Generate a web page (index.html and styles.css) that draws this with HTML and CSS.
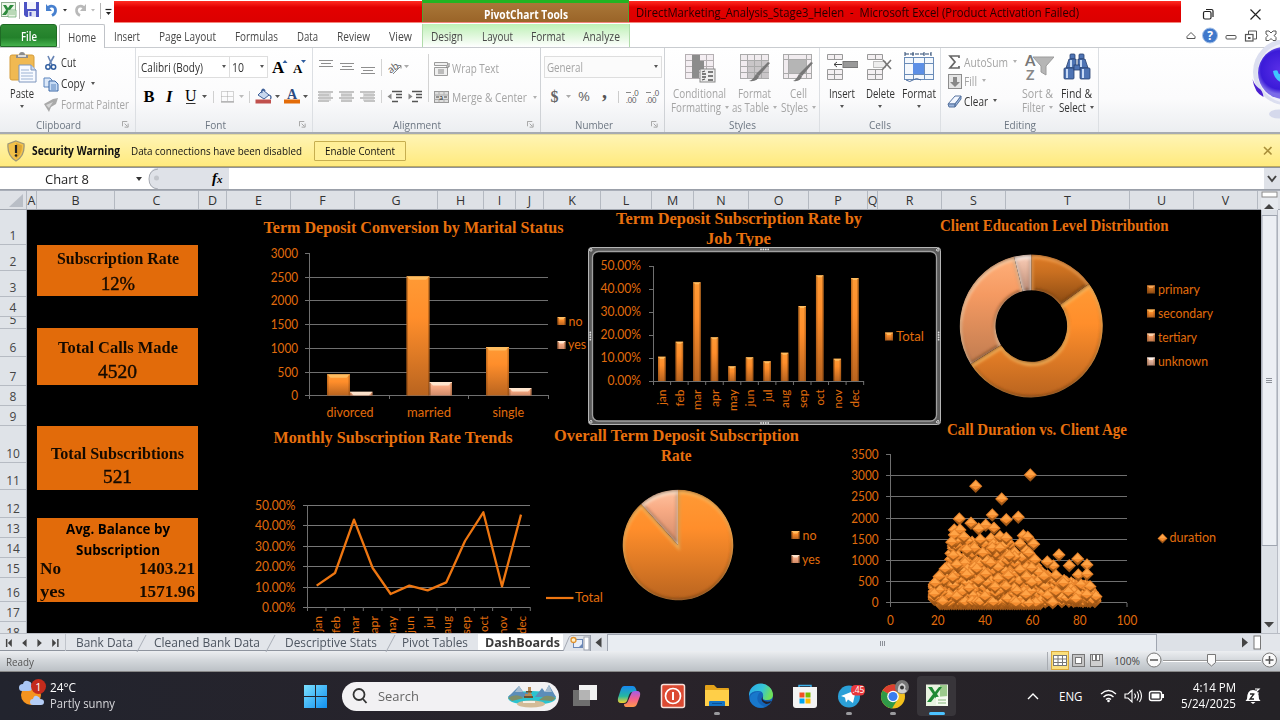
FILE: index.html
```html
<!DOCTYPE html>
<html lang="en">
<head>
<meta charset="utf-8">
<title>DirectMarketing_Analysis_Stage3_Helen - Microsoft Excel</title>
<link rel="stylesheet" href="styles.css">
</head>
<body>
<div class="app">
  <header class="titlebar">
    <svg class="quick" viewBox="0 0 114 24">
      <rect x="1.500" y="2.500" width="14" height="14" fill="#eef6ea" stroke="#8fae8f"/>
      <path d="M3 5l3 0 2 3 2-3h4l-4 5 4 5h-4l-2-3-2 3H2l4-5z" fill="#2e8b3d"/><path d="M8 10h8v7h-8z" fill="#e6f3e2" stroke="#5da465" stroke-width=".7"/><path d="M9 12h6M9 14h6" stroke="#8cbf8c"/>
      <path d="M19.500 2v17M100.500 3v16" stroke="#b5b5b5"/>
      <path d="M24 2h15v15H26l-2-2z" fill="#4c53c4"/><rect x="27" y="2" width="9" height="7" fill="#f3f4fc"/><rect x="28" y="11" width="8" height="6" fill="#dfe2f4"/><rect x="29.500" y="12" width="2" height="4" fill="#4c53c4"/>
      <path d="M47 9c3-5 9-3 8.500 2-.2 2-1.500 3.500-3.500 4.500" fill="none" stroke="#4780cf" stroke-width="2.800"/><path d="M46 4v7h6z" fill="#4780cf"/>
      <path d="M63 9h4l-2 2.500z" fill="#333"/>
      <path d="M85 9c-3-5-9-3-8.500 2 .2 2 1.500 3.500 3.500 4.500" fill="none" stroke="#b9b9b9" stroke-width="2.600"/><path d="M86 4v7h-6z" fill="#b9b9b9"/>
      <path d="M91 9h4l-2 2.500z" fill="#bbb"/>
      <path d="M105.500 9.500h6" stroke="#222" stroke-width="1.200"/><path d="M106 12h5l-2.500 3z" fill="#222"/>
    </svg>
    <div class="redbar">
      <div class="tools-title"><span class="fit" data-w="84">PivotChart Tools</span></div>
      <div class="doc-title"><span class="fit" data-w="443">DirectMarketing_Analysis_Stage3_Helen&nbsp; -&nbsp; Microsoft Excel (Product Activation Failed)</span></div>
    </div>
    <svg class="winctl" viewBox="1181 0 99 24"><g fill="none" stroke="#222" stroke-width="1.200"><rect x="1203.500" y="11.500" width="7.500" height="7.500" rx="1.500"/><path d="M1206 9.500h5.500q1.500 0 1.500 1.500v6"/><path d="M1250.500 9.500l10 10M1260.500 9.500l-10 10"/></g></svg>
  </header>

  <nav class="tabs">
    <div class="file"><span class="fit" data-w="16">File</span></div>
    <div class="tab home"><span class="fit" data-w="28">Home</span></div>
    <div class="tab t-insert"><span class="fit" data-w="26">Insert</span></div>
    <div class="tab t-page"><span class="fit" data-w="57">Page Layout</span></div>
    <div class="tab t-form"><span class="fit" data-w="43">Formulas</span></div>
    <div class="tab t-data"><span class="fit" data-w="21">Data</span></div>
    <div class="tab t-rev"><span class="fit" data-w="33">Review</span></div>
    <div class="tab t-view"><span class="fit" data-w="23">View</span></div>
    <div class="ctx">
      <div class="tab t-des"><span class="fit" data-w="32">Design</span></div>
      <div class="tab t-lay"><span class="fit" data-w="31">Layout</span></div>
      <div class="tab t-fmt"><span class="fit" data-w="34">Format</span></div>
      <div class="tab t-ana"><span class="fit" data-w="37">Analyze</span></div>
    </div>
    <svg class="docctl" viewBox="1180 24 100 24">
      <path d="M1187 38.500v-2l4-4 4 4v2z" fill="#fff" stroke="#555"/>
      <circle cx="1210" cy="35.500" r="7.500" fill="#3f78cb" stroke="#a9c3e8"/><text x="1210" y="40" class="help">?</text>
      <rect x="1226" y="35.500" width="10" height="3.500" rx="1" fill="#fff" stroke="#555"/>
      <path d="M1248.500 35v-4h8v8h-3" fill="#fff" stroke="#555"/><rect x="1245.500" y="34.500" width="7.500" height="6.500" fill="#fff" stroke="#555" stroke-width="1.200"/><rect x="1248" y="37" width="2.500" height="2" fill="#555"/>
      <path d="M1266 31h3l2 2 2-2h3v3l-2 1.500 2 2v3h-3l-2-2-2 2h-3v-3l2-2-2-1.500z" fill="#fff" stroke="#555" stroke-width="1"/>
    </svg>
  </nav>

  <section class="ribbon">
    <div class="group g-clip">
      <div class="body">
        <div class="big b-paste">
          <svg class="ico32" viewBox="0 0 32 32"><rect x="4" y="3" width="24" height="25" rx="2" fill="#f0b952" stroke="#d49c3a"/><path d="M10 6V3h3q0-3 3-3t3 3h3v3z" fill="#8c8c8c"/><rect x="12" y="3" width="8" height="2" fill="#ddd"/><path d="M13 13h12l5 5v12H13z" fill="#f7faff" stroke="#7d95bd"/><path d="M25 13v5h5" fill="#c9d9ef" stroke="#7d95bd"/><path d="M15 18h8M15 21h12M15 24h12M15 27h12" stroke="#9db3d3"/></svg>
          <span class="fit" data-w="24">Paste</span><i class="dn gap"></i>
        </div>
        <div class="list">
          <div class="row"><svg class="ico16" viewBox="0 0 16 16"><path d="M5 1l4 9M11 1L6 10" stroke="#6885b5" stroke-width="1.600"/><circle cx="5" cy="12" r="2.200" fill="none" stroke="#2f5d9f" stroke-width="1.500"/><circle cx="10.500" cy="12" r="2.200" fill="none" stroke="#2f5d9f" stroke-width="1.500"/></svg><span class="fit" data-w="15">Cut</span></div>
          <div class="row"><svg class="ico16" viewBox="0 0 16 16"><path d="M1 2h6l2 2v7H1z" fill="#dce8f8" stroke="#5b84bd"/><path d="M6 5h6l3 3v7H6z" fill="#c6dbf5" stroke="#3d69a6"/><path d="M8 9h5M8 11h5M8 13h5" stroke="#5b84bd"/></svg><span class="fit" data-w="24">Copy</span><i class="dn side"></i></div>
          <div class="row off"><svg class="ico16" viewBox="0 0 16 16"><path d="M1 7l9-5 5-1-2 6-5 3-2 5z" fill="#a9a9a9"/><path d="M3 8l7-3-4 6z" fill="#d6d6d6"/></svg><span class="fit" data-w="68">Format Painter</span></div>
        </div>
      </div>
      <div class="cap"><span class="fit" data-w="45">Clipboard</span><svg class="dlg" viewBox="0 0 8 8"><path d="M.5 6V.5H6M3 3l3 3M7 3v4H3" fill="none" stroke="#999"/></svg></div>
    </div>

    <div class="group g-font">
      <div class="body col">
        <div class="combos">
          <div class="combo c-face"><span class="fit" data-w="62">Calibri (Body)</span><i class="dn"></i></div>
          <div class="combo c-size"><span class="fit" data-w="12">10</span><i class="dn"></i></div>
          <svg class="grow" viewBox="269 56 44 22"><text x="273" y="73" class="ser b" font-size="17">A</text><path d="M283.500 63l2.500-3 2.500 3z" fill="#2f5d9f"/><text x="294" y="73" class="ser b" font-size="13">A</text><path d="M302 60h5l-2.500 3z" fill="#2f5d9f"/></svg>
        </div>
        <svg class="strip" viewBox="136 84 177 25">
          <text x="143.500" y="102" class="ser b" font-size="16.500">B</text><text x="166" y="102" class="ser b i" font-size="16.500">I</text><text x="185" y="101" class="ser" font-size="16">U</text><path d="M186 103.500h9.500" stroke="#333"/>
          <g fill="#555"><path d="M202 95h5l-2.500 3zM275 95h5l-2.500 3zM303 95h5l-2.500 3z"/><path d="M239 95h5l-2.500 3z" fill="#bbb"/></g>
          <path d="M213.500 91v12M249.500 91v12" stroke="#d0d0d0"/>
          <path d="M221.500 91.500h12v10h-12zM227.500 91.500v10M221.500 96.500h12" fill="none" stroke="#aaa" stroke-dasharray="1 1"/><path d="M221 102h13" stroke="#999"/>
          <rect x="255.500" y="99.500" width="15.500" height="4" fill="#c0504d"/><path d="M258 95l5-5 6 5-5 4z" fill="#c8d8ef" stroke="#3f6098"/><path d="M262 93c-1-4 2-5 3-2M269 95q3 1 1.500 4" fill="none" stroke="#3f6098" stroke-width="1.300"/>
          <rect x="284" y="99.500" width="16" height="4" fill="#e36c09"/><text x="287" y="99" class="ser b" font-size="14" fill="#2c4a80">A</text>
        </svg>
      </div>
      <div class="cap"><span class="fit" data-w="21">Font</span><svg class="dlg" viewBox="0 0 8 8"><path d="M.5 6V.5H6M3 3l3 3M7 3v4H3" fill="none" stroke="#999"/></svg></div>
    </div>

    <div class="group g-align">
      <div class="body">
        <svg class="alignstrip" viewBox="314 52 116 58">
          <g stroke="#8e8e8e" stroke-width="1"><path d="M320 60.500h14M322 63.500h10M320 66.500h14M341 63.500h14M343 66.500h10M341 69.500h14M362 67.500h14M364 70.500h10M362 73.500h14"/><path d="M382.500 59v17M382.500 90v13M429.500 54v48" stroke="#d3d3d3"/></g>
          <text x="388" y="71" font-size="10.500" class="lato" transform="rotate(-35 394 67)" fill="#666">ab</text><path d="M394 74l8-8M399 65.500h3v3" stroke="#888" fill="none"/><path d="M405 65h5l-2.500 3z" fill="#aaa"/>
          <g fill="#c4c4c4"><path d="M319 91h15v2h-15zM319 94h11v2h-11zM319 97h15v2h-15zM319 100h11v2h-11zM340 91h15v2h-15zM342 94h11v2h-11zM340 97h15v2h-15zM342 100h11v2h-11zM361 91h15v2h-15zM365 94h11v2h-11zM361 97h15v2h-15zM365 100h11v2h-11z"/><path d="M320 92h12v9h-12zM342 92h11v9h-11zM364 92h11v9h-11z" opacity=".6"/></g>
          <path d="M393 91.500h10M397 94.500h6M397 97.500h6M393 101.500h6M413 91.500h10M417 94.500h6M417 97.500h6M413 101.500h6" stroke="#555" stroke-width="1.400"/><path d="M388.500 96.500l4-3v6zM413.500 96.500l-4-3v6z" fill="#888"/>
        </svg>
        <div class="list off wrapcol">
          <div class="row r32"><svg class="ico16" viewBox="0 0 16 16"><path d="M.5 1.500h13v3H.5zM.5 6.500h13v8H.5z" fill="#efefef" stroke="#9b9b9b"/><rect x="4" y="8" width="6" height="5" fill="#bbb"/><path d="M15 2v4h-3" stroke="#777" fill="none"/></svg><span class="fit" data-w="47">Wrap Text</span></div>
          <div class="row r29"><svg class="ico16" viewBox="0 0 16 16"><rect x=".5" y="2.500" width="14" height="11" fill="#dedede" stroke="#999"/><path d="M.5 6h14M.5 10.500h14M5 2.500v3M10 2.500v3M5 11v2.500M10 11v2.500" stroke="#aaa"/><path d="M2 8h3M10 8h3" stroke="#444"/><text x="5.200" y="10.500" font-size="7.500" class="lato" fill="#333">a</text></svg><span class="fit" data-w="75">Merge &amp; Center</span><i class="dn side"></i></div>
        </div>
      </div>
      <div class="cap"><span class="fit" data-w="48">Alignment</span><svg class="dlg" viewBox="0 0 8 8"><path d="M.5 6V.5H6M3 3l3 3M7 3v4H3" fill="none" stroke="#999"/></svg></div>
    </div>

    <div class="group g-num">
      <div class="body col">
        <div class="combos"><div class="combo c-num"><span class="fit" data-w="36">General</span><i class="dn"></i></div></div>
        <svg class="numstrip" viewBox="541 84 123 25">
          <text x="550.500" y="102" class="ser b" font-size="16" fill="#666">$</text><path d="M566 95h5l-2.500 3z" fill="#aaa"/><text x="578" y="101" font-size="13" fill="#666" textLength="12" lengthAdjust="spacingAndGlyphs">%</text><text x="602" y="98" class="ser b" font-size="20" fill="#555">,</text><path d="M618.500 91v12" stroke="#ccc"/>
          <g class="lato" font-size="7.500" fill="#555"><text x="632.500" y="95.500">.0</text><text x="626" y="102.500">.00</text><text x="653" y="95.500">.0</text><text x="646" y="102.500">.00</text></g><path d="M626 92.500h5M646 92.500h5" stroke="#888"/>
        </svg>
      </div>
      <div class="cap"><span class="fit" data-w="38">Number</span><svg class="dlg" viewBox="0 0 8 8"><path d="M.5 6V.5H6M3 3l3 3M7 3v4H3" fill="none" stroke="#999"/></svg></div>
    </div>

    <div class="group g-sty">
      <div class="body off">
        <div class="big s1"><svg class="ico32" viewBox="0 0 32 32"><rect x="1.500" y="2.500" width="28" height="24" fill="#f4eef2" stroke="#b5b0b3"/><path d="M1 8.500h29M1 14.500h29M1 20.500h29M22.500 2v24" stroke="#b5b0b3"/><path d="M8 3h8v6h4v9h-5v8H8z" fill="#8c8c8c"/><rect x="16" y="17" width="15" height="13" fill="#eee" stroke="#888"/><path d="M18 20l3-1M18 22h4M24 20h5M18 25h4M24 24h5M18 28l3-1M24 28h5" stroke="#555" stroke-width="1.300"/></svg><span class="fit" data-w="53">Conditional</span><b><span class="fit" data-w="50">Formatting</span><i class="dn side"></i></b></div>
        <div class="big s2"><svg class="ico32" viewBox="0 0 32 32"><rect x="1.500" y="2.500" width="28" height="24" fill="#f1ecef" stroke="#aaa"/><path d="M8 8h22v18H8z" fill="#c9c6c8"/><path d="M1 8.500h29M1 14.500h29M1 20.500h29M8.500 2v24M15.500 2v24M22.500 2v24" stroke="#aaa"/><path d="M31 11l-11 13-3-2 12-12z" fill="#777"/><path d="M20 24q-1 6-10 5 4-1 7-7z" fill="#777"/></svg><span class="fit" data-w="33">Format</span><b><span class="fit" data-w="37">as Table</span><i class="dn side"></i></b></div>
        <div class="big s3"><svg class="ico32" viewBox="0 0 32 32"><rect x="1.500" y="2.500" width="28" height="24" fill="#f1ecef" stroke="#aaa"/><path d="M1 7.500h29M1 21.500h29M6.500 2v24M24.500 2v24" stroke="#aaa"/><path d="M7 8h17v13H7z" fill="#b5b5b5"/><path d="M31 11l-11 13-3-2 12-12z" fill="#777"/><path d="M20 24q-1 6-9 5 3-1 6-7z" fill="#777"/></svg><span class="fit" data-w="17">Cell</span><b><span class="fit" data-w="27">Styles</span><i class="dn side"></i></b></div>
      </div>
      <div class="cap"><span class="fit" data-w="27">Styles</span></div>
    </div>

    <div class="group g-cell">
      <div class="body">
        <div class="big c1"><svg class="ico32" viewBox="0 0 32 32"><path d="M1.500 2.500h15v5h-15zM8.500 2v5M1.500 17.500h15v10h-15zM8.500 17v10M1 22.500h15" fill="#f4f0f2" stroke="#999"/><rect x="17" y="9.500" width="15" height="6" fill="#999" stroke="#777"/><path d="M8 12.500h8M11 10l-3 2.500 3 2.500" stroke="#444" fill="none"/></svg><span class="fit" data-w="26">Insert</span><i class="dn gap"></i></div>
        <div class="big c2"><svg class="ico32" viewBox="0 0 32 32"><path d="M3.500 2.500h15v5h-15zM11.500 2v5M3.500 17.500h15v10h-15zM11.500 17v10M3 22.500h15" fill="#f4f0f2" stroke="#999"/><path d="M9.500 9.500h12v6h-12z" fill="#eee" stroke="#888" stroke-dasharray="1 1"/><path d="M19 8l8 9M27 8l-9 10" stroke="#777" stroke-width="1.600"/></svg><span class="fit" data-w="29">Delete</span><i class="dn gap"></i></div>
        <div class="big c3"><svg class="ico32" viewBox="0 0 32 32"><rect x="1.500" y="5.500" width="29" height="22" fill="#f4f8fd" stroke="#6a8cb8"/><path d="M1 11.500h29M1 22.500h29M10.500 5v22M21.500 5v22" stroke="#6a8cb8"/><rect x="10" y="11" width="11" height="11" fill="#5c8fe6"/><path d="M2 2h26M2 0v5M10 0v4M21 0v4M28 0v5" stroke="#26456f" stroke-dasharray="4 1"/><path d="M3 28q4 3 7 0t8 0" stroke="#4c6ea0" fill="none"/></svg><span class="fit" data-w="34">Format</span><i class="dn gap"></i></div>
      </div>
      <div class="cap"><span class="fit" data-w="22">Cells</span></div>
    </div>

    <div class="group g-edit">
      <div class="body">
        <div class="list edit">
          <div class="row e1 off"><svg class="ico16" viewBox="0 0 16 16"><path d="M12 4V2H3l5 6-5 6h9v-2" fill="none" stroke="#666" stroke-width="1.700"/></svg><span class="fit" data-w="44">AutoSum</span><i class="dn side"></i></div>
          <div class="row e1 off"><svg class="ico16" viewBox="0 0 16 16"><rect x="1.500" y="1.500" width="13" height="14" fill="#e5e5e5" stroke="#8d8d8d"/><path d="M6 4h4v5h3l-5 5-5-5h3z" fill="#888"/></svg><span class="fit" data-w="13">Fill</span><i class="dn side"></i></div>
          <div class="row e2"><svg class="ico16" viewBox="0 0 16 16"><path d="M1 11l7-8h6l-6 8z" fill="#f3f7ff" stroke="#56739f"/><path d="M1 11h7v3H2zM8 14l6-8V3l-6 8z" fill="#9bb5dc" stroke="#56739f"/></svg><span class="fit" data-w="24">Clear</span><i class="dn side"></i></div>
        </div>
        <div class="big f1 off"><svg class="ico32" viewBox="0 0 32 32"><path d="M11 5h21l-8 9v9l-5-3v-6z" fill="#b6b6b6" stroke="#9c9c9c"/><text x="3" y="14" class="lato b" font-size="15" fill="#777">A</text><text x="4" y="28" class="lato b" font-size="14" fill="#888">Z</text></svg><span class="fit" data-w="31">Sort &amp;</span><b><span class="fit" data-w="23">Filter</span><i class="dn side"></i></b></div>
        <div class="big f2"><svg class="ico32" viewBox="0 0 32 32"><g fill="#4f74b4" stroke="#263f70" stroke-width=".8"><rect x="9" y="2" width="5" height="5" rx="1"/><rect x="18" y="2" width="5" height="5" rx="1"/><path d="M8 7h7v9H5zM17 7h7l3 9H17z"/><rect x="3" y="16" width="10" height="11" rx="1"/><rect x="19" y="16" width="10" height="11" rx="1"/><rect x="13" y="13" width="6" height="5"/></g><path d="M6 17v9M22 17v9M10 8v7M20 8v7" stroke="#c8daf5" stroke-width="2"/></svg><span class="fit" data-w="31">Find &amp;</span><b><span class="fit" data-w="27">Select</span><i class="dn side"></i></b></div>
      </div>
      <div class="cap"><span class="fit" data-w="32">Editing</span></div>
    </div>
    <svg class="bot" viewBox="1250 40 30 84"><defs><radialGradient id="bg" cx="1280" cy="70" r="24" gradientUnits="userSpaceOnUse"><stop offset="0" stop-color="#5a2fe8"/><stop offset=".8" stop-color="#3b1bd8"/><stop offset="1" stop-color="#7b6be8"/></radialGradient></defs><circle cx="1286" cy="72" r="33" fill="#dcdff0"/><circle cx="1287" cy="73" r="29.500" fill="#f0f0fa"/><circle cx="1284" cy="73" r="26" fill="url(#bg)"/><path d="M1273 71q5-2 5 1t5 2v9q-9-3-10-12z" fill="#3fc6ff"/><path d="M1252.500 79q2 14 11 18-1-7-5-9-4-3-6-9z" fill="#4a1fd0"/><ellipse cx="1279" cy="114" rx="10" ry="4.500" fill="#d5d9ec"/></svg>
  </section>

  <section class="warning">
    <svg class="shield" viewBox="0 0 18 22"><path d="M9 1l8 3q1 12-8 17Q0 16 1 4z" fill="#f2c14a" stroke="#9f9878" stroke-width="1.300"/><path d="M9 3l6 2.500q0 9-6 13z" fill="#e0a631"/><path d="M9 5v8" stroke="#222" stroke-width="2.200"/><circle cx="9" cy="15.500" r="1.300" fill="#222"/></svg>
    <strong class="fit" data-w="88">Security Warning</strong>
    <span class="msg fit" data-w="171">Data connections have been disabled</span>
    <button class="enable"><span class="fit" data-w="70">Enable Content</span></button>
    <svg class="wclose" viewBox="0 0 10 10"><path d="M1 1l7.500 7.500M8.500 1L1 8.500" stroke="#a98f3a" stroke-width="1.600"/></svg>
  </section>

  <section class="formula">
    <div class="namebox"><span class="fit" data-w="44">Chart 8</span><i class="dn"></i></div>
    <div class="fx"><svg class="fxicon" viewBox="148 167 81 21"><path d="M155 167h74v21h-74q-6-2-6-10t6-11z" fill="#dfe2e8"/><path d="M158 168q-9 1-9 10t9 10" fill="none" stroke="#a7abb3"/><circle cx="156.500" cy="177" r="2.500" fill="#c3c6cc"/><text x="212" y="182" class="ser b i" font-size="15">f</text><text x="217" y="182" class="ser b i" font-size="11">x</text></svg></div>
    <div class="input"></div>
    <svg class="expand" viewBox="0 0 16 21"><path d="M4 8l4 5 4-5" fill="none" stroke="#444" stroke-width="2"/></svg>
  </section>

  <main class="book">
    <div class="colhead" id="cols"></div>
    <div class="work">
      <div class="rowhead" id="rows"></div>
      <div class="sheet">
        <div class="kpis">
          <div class="kpi k1"><h3><span class="fit" data-w="122">Subscription Rate</span></h3><p><span class="fit" data-w="34">12%</span></p></div>
          <div class="kpi k2"><h3><span class="fit" data-w="120">Total Calls Made</span></h3><p><span class="fit" data-w="39">4520</span></p></div>
          <div class="kpi k3"><h3><span class="fit" data-w="133">Total Subscribtions</span></h3><p><span class="fit" data-w="29">521</span></p></div>
          <div class="kpi k4"><h4><span class="fit" data-w="104">Avg. Balance by</span></h4><h4><span class="fit" data-w="84">Subscription</span></h4>
            <div class="pair"><span class="fit" data-w="21">No</span><span class="fit" data-w="56">1403.21</span></div>
            <div class="pair p2"><span class="fit" data-w="25">yes</span><span class="fit" data-w="56">1571.96</span></div></div>
        </div>
        <svg class="chart ch-marital" id="marital" viewBox="230 212 358 210"></svg>
        <svg class="chart ch-job" id="jobtitle" viewBox="590 210 340 36"></svg>
        <svg class="chart ch-edu" id="edu" viewBox="932 212 328 196"></svg>
        <svg class="chart ch-trend" id="trend" viewBox="230 426 378 207"></svg>
        <svg class="chart ch-pie" id="pie" viewBox="545 426 290 200"></svg>
        <svg class="chart ch-scatter" id="scatter" viewBox="840 412 420 221"></svg>
        <svg class="chart ch-rate" id="rate" viewBox="587 246 356 180"></svg>
      </div>
      <svg class="vscroll" viewBox="1261 210 19 423">
        <rect x="1261" y="210" width="19" height="423" fill="#e9ecf1"/><rect x="1261.500" y="209.500" width="16" height="424" fill="#dde1e7" stroke="#b9bdc6"/>
        <rect x="1262" y="215.500" width="15" height="330" fill="#eceff4" stroke="#9fa5b0"/><path d="M1266 378.500h6M1266 380.500h6M1266 382.500h6" stroke="#8c9098"/><path d="M1264 622h10l-5 5.500z" fill="#444"/>
      </svg>
    </div>
  </main>

  <section class="sheettabs">
    <svg class="navs" viewBox="0 633 66 18"><g fill="#444"><path d="M6 638h1.500v8H6zM12 638v8l-4-4zM27 638v8l-4.500-4zM38 638v8l4.500-4zM53 638v8l4-4zM58 638h1.500v8H58z"/></g></svg>
    <div class="stab w1"><span class="fit" data-w="57">Bank Data</span></div>
    <div class="stab w2"><span class="fit" data-w="106">Cleaned Bank Data</span></div>
    <div class="stab w3"><span class="fit" data-w="92">Descriptive Stats</span></div>
    <div class="stab w4"><span class="fit" data-w="66">Pivot Tables</span></div>
    <div class="stab active"><span class="fit" data-w="75">DashBoards</span></div>
    <svg class="hscroll" viewBox="563 633 717 18">
      <path d="M563 650.500l6-14q1-2 3-2h18v16z" fill="#dfe3e9" stroke="#a4a9b3"/><rect x="573.500" y="638.500" width="9" height="8" fill="#e8effa" stroke="#6b87b5"/><path d="M579 646l3-3v3z" fill="#6b87b5"/><circle cx="573.500" cy="639" r="2.500" fill="#fff3cc" stroke="#e0922e" stroke-width="1.300"/>
      <rect x="584" y="636" width="5" height="13" fill="#fff" stroke="#9aa0ab"/>
      <rect x="590.500" y="633.500" width="690" height="17" fill="#dde1e7"/><path d="M590.500 634v16" stroke="#9aa0ab"/><path d="M601.500 636.500v10l-6-5z" fill="#444"/>
      <rect x="607.500" y="633.500" width="549" height="17" fill="#e9edf2" stroke="#9fa5b0"/><path d="M880.500 640v5M882.500 640v5M884.500 640v5" stroke="#8c9098"/>
      <path d="M1242 636.500v10l6-5z" fill="#444"/><rect x="1254" y="635" width="6.500" height="13" fill="#fff" stroke="#777"/><rect x="1261" y="633" width="19" height="18" fill="#e3e6eb"/>
    </svg>
  </section>

  <footer class="status">
    <span class="fit ready" data-w="28">Ready</span>
    <svg class="views" viewBox="1040 652 240 20">
      <path d="M1047.500 653v18" stroke="#a8acb2"/>
      <rect x="1051.500" y="652.500" width="17" height="18" fill="#fbdf7d" stroke="#d9a93d"/><g fill="#fff" stroke="#777"><rect x="1053.500" y="656.500" width="13" height="10"/><path d="M1053 660h13M1053 663.500h13M1058 656v10M1062.500 656v10" fill="none"/>
      <rect x="1072.500" y="655.500" width="12" height="12" fill="#c5c5c5"/><rect x="1075.500" y="658.500" width="6" height="6"/><rect x="1090.500" y="655.500" width="12" height="12" fill="#cfcfcf"/><rect x="1092.500" y="655.500" width="3" height="6"/><rect x="1096.500" y="655.500" width="3" height="6"/></g>
      <text x="1114" y="666" font-size="11.500" fill="#444" textLength="26" lengthAdjust="spacingAndGlyphs">100%</text>
      <path d="M1163 661.500h98" stroke="#999"/><path d="M1163 662.500h98" stroke="#fff"/>
      <g fill="#fafafa" stroke="#777"><circle cx="1154" cy="661" r="7"/><circle cx="1269.500" cy="661" r="7"/><path d="M1207.500 655.500h8v8l-4 3.500-4-3.500z"/></g>
      <path d="M1150 661h8M1265.500 661h8M1269.500 657v8" stroke="#555" stroke-width="1.500"/>
    </svg>
  </footer>

  <footer class="taskbar">
    <div class="weather">
      <svg class="wicon" viewBox="18 677 30 30"><circle cx="31" cy="695" r="10" fill="#f5941f"/><path d="M22 691q-3 0-3-3.500t4-3.500q1-4 5-3t3.500 4q2 6-3 6z" fill="#a9c6f5"/><path d="M33 705q-3 0-3-3t3-3q1-4 4-3t3 3q4 0 4 3t-3 3z" fill="#b5cef7"/><circle cx="38.500" cy="686.500" r="7.500" fill="#c42b1c"/><text x="38.500" y="690.500" font-size="11" fill="#fff" text-anchor="middle">1</text></svg>
      <div class="wtext"><span class="fit" data-w="26">24°C</span><span class="fit" data-w="65">Partly sunny</span></div>
    </div>
    <svg class="start" viewBox="0 0 23 23"><defs><linearGradient id="wg" x2="1" y2="1"><stop offset="0" stop-color="#7be0ff"/><stop offset="1" stop-color="#1090f0"/></linearGradient></defs><path d="M0 0h11v11H0zM12 0h11v11H12zM0 12h11v11H0zM12 12h11v11H12z" fill="url(#wg)"/></svg>
    <div class="search">
      <svg class="mag" viewBox="0 0 18 18"><circle cx="8" cy="7.500" r="5.500" fill="none" stroke="#333" stroke-width="1.800"/><path d="M12 12l3.500 4" stroke="#333" stroke-width="1.800"/></svg>
      <span class="fit" data-w="41">Search</span>
      <svg class="scene" viewBox="0 0 50 24"><ellipse cx="25" cy="14" rx="24" ry="7" fill="#2cc3cf"/><path d="M1 13l11-11 5 7 3-1 3 5zM28 13l7-9 3 4 4-7 7 12z" fill="#5b8db8"/><path d="M8 8l4-6 4 6zM38 8l4-7 3 7z" fill="#a7bdd0"/><path d="M1 14q6-4 12-2l4 2-12 3zM49 14q-8-4-13-1l-4 3 13 1z" fill="#7f8f68"/><ellipse cx="24" cy="20" rx="14" ry="3.500" fill="#d3bb98"/><path d="M18 14h7v-4h-1V3h-3v7h-3z" fill="#b78a55"/><path d="M17 12h9v2h-9zM19 7h6v1.500h-6z" fill="#6e5230"/><path d="M16 17h12v2H16z" fill="#f5efe4"/></svg>
    </div>
    <div class="apps">
      <div class="appi"><svg viewBox="0 0 30 30"><rect x="3" y="9" width="17" height="16" fill="#6e6e6e"/><rect x="9" y="4" width="18" height="15" fill="#f2f2f2"/><path d="M9 9h11v10H9z" fill="#b4b4b4"/></svg></div>
      <div class="appi"><svg viewBox="0 0 30 30"><defs><linearGradient id="ca" x2="0" y2="1"><stop offset="0" stop-color="#1687f0"/><stop offset=".6" stop-color="#25b7a0"/><stop offset="1" stop-color="#f5d22b"/></linearGradient><linearGradient id="cb" x2="0" y2="1"><stop offset="0" stop-color="#a55ce8"/><stop offset=".5" stop-color="#f2608e"/><stop offset="1" stop-color="#ff9a4a"/></linearGradient></defs><path d="M10 5h9q2 0 3 3l1 3h-5q-2 0-3 3l-2 6q-1 2-3 2H7q-4 0-3-5l3-9q1-3 3-3z" fill="url(#ca)"/><path d="M21 10h2q4 0 3 5l-3 8q-1 3-4 3h-7q-2 0-2-3 3 0 4-3l3-7q1-3 4-3z" fill="url(#cb)"/></svg></div>
      <div class="appi"><svg viewBox="0 0 30 30"><rect x="3.500" y="3.500" width="23" height="23" rx="2" fill="#db4a32" stroke="#f6e0da" stroke-width="1.500"/><circle cx="15" cy="15" r="7.500" fill="none" stroke="#fff" stroke-width="1.700"/><path d="M15 11v8" stroke="#fff" stroke-width="2"/></svg></div>
      <div class="appi run"><svg viewBox="0 0 30 30"><path d="M3 5q0-1 1-1h8l3 3h11q1 0 1 1v17H3z" fill="#e3a21a"/><path d="M3 9h24v16H3z" fill="#ffcf48"/><path d="M8 20h14q1 0 1 1v4H7v-4q0-1 1-1z" fill="#1474c4"/><path d="M10 22.500h10" stroke="#0c4f91"/></svg></div>
      <div class="appi"><svg viewBox="0 0 30 30"><defs><linearGradient id="ea" x2="1" y2=".3"><stop offset="0" stop-color="#2aa8e8"/><stop offset=".6" stop-color="#35c5d8"/><stop offset="1" stop-color="#6fe05a"/></linearGradient></defs><circle cx="15" cy="15" r="12" fill="#1464b8"/><path d="M3 15a12 12 0 0 1 24-1q0 5-6 5-5 0-4-3 1-6-5-6-7 0-9 5z" fill="url(#ea)"/><path d="M12 14q-3 8 7 12-10 3-15-6-1-6 4-8 4-2 8-1-3 0-4 3z" fill="#1878cc"/><path d="M17 15q-4 5 3 8 4 0 6-3-6 2-9-1-1-2 0-4z" fill="#26222a"/></svg></div>
      <div class="appi"><svg viewBox="0 0 30 30"><path d="M9 8V4.500h12V8" fill="none" stroke="#3db0ea" stroke-width="1.500"/><path d="M3 6h24v18q0 3-3 3H6q-3 0-3-3z" fill="#f4f4f4"/><path d="M9.500 11.500h5v5h-5z" fill="#f25022"/><path d="M15.500 11.500h5v5h-5z" fill="#7fba00"/><path d="M9.500 17.500h5v5h-5z" fill="#00a4ef"/><path d="M15.500 17.500h5v5h-5z" fill="#ffb900"/></svg></div>
      <div class="appi run"><svg viewBox="0 0 30 30"><circle cx="15" cy="15.500" r="11" fill="#2ba0d8"/><path d="M7 15l15-6-3 13-5-3.500-2 3-1-5z" fill="#fff"/><rect x="17" y="4" width="14" height="10.500" rx="4.500" fill="#e9383c"/><text x="18.500" y="12.300" font-size="9" fill="#fff" textLength="12" lengthAdjust="spacingAndGlyphs">.45</text></svg></div>
      <div class="appi run"><svg viewBox="0 0 30 30"><circle cx="15" cy="15.500" r="12" fill="#f3c01c"/><path d="M15 15.500L4.600 9.500A12 12 0 0 1 26 10.500H15z" fill="#dc3f30"/><path d="M15 15.500L4.600 9.500A12 12 0 0 0 14 27.500l5.500-9z" fill="#2f9a48"/><circle cx="15" cy="15.500" r="5.800" fill="#fff"/><circle cx="15" cy="15.500" r="4.500" fill="#3b7ded"/><circle cx="24" cy="6" r="7" fill="#777"/><path d="M20 11q-1-7 4-9 5 2 3 6l2 2q-3 4-9 1z" fill="#d0d0d0"/><circle cx="24" cy="6.500" r="2" fill="#333"/></svg></div>
      <div class="appi cur"><svg viewBox="0 0 30 30"><rect x="4" y="3.500" width="22" height="21.500" fill="#e8f3e0"/><path d="M18 4h7v12h-7z" fill="#9ccb8c"/><path d="M6 6h4l3 5 4-5h3l-5 7 5 8h-4l-3-5-4 5H5l6-8z" fill="#1f8a35"/><path d="M14 16l12-1v10l-12-1z" fill="#f5fbf0"/><path d="M16 19h8M16 22h8" stroke="#84b57a"/></svg></div>
    </div>
    <svg class="tray" viewBox="1020 680 162 32"><g fill="none" stroke="#fff" stroke-width="1.400"><path d="M1028 699l5-5 5 5"/><path d="M1101 694q7.500-7 15 0M1103.500 697q5-4.500 10 0M1106 699.500q2.500-2 5 0"/><path d="M1125 694h3l4-4v12l-4-4h-3zM1134.500 693.500q2 2.500 0 5M1137 691.500q3 4.500 0 9M1139.500 690q4 6 0 12" stroke-width="1.100"/><rect x="1149.500" y="691.500" width="12" height="9" rx="2"/></g><circle cx="1108.500" cy="701" r="1.300" fill="#fff"/><rect x="1151.500" y="693.500" width="8" height="5" fill="#fff"/><path d="M1162 694h2v4h-2z" fill="#fff"/><text x="1059" y="700.500" font-size="12" fill="#fff" textLength="23.500" lengthAdjust="spacingAndGlyphs">ENG</text></svg>
    <div class="clock"><span class="fit" data-w="43">4:14 PM</span><span class="fit" data-w="55">5/24/2025</span></div>
    <svg class="bell" viewBox="0 0 18 18"><path d="M3 12q0-9 6-9t6 9l1.500 2h-15z" fill="#fff"/><path d="M6.500 15h5l-2.500 2z" fill="#fff"/><path d="M6 7h4l-4 5h4" fill="none" stroke="#222" stroke-width="1.300"/><path d="M11 2h4l-4 4h4" fill="none" stroke="#fff" stroke-width="1.200"/></svg>
  </footer>
</div>
<script src="charts.js"></script>
</body>
</html>
```
FILE: styles.css
```css
* { box-sizing: border-box; }
body { margin: 0; background: #fff; font-family: "Open Sans", "Noto Sans", sans-serif; font-size: 11.5px; color: #333; overflow: hidden; }
.app { width: 1280px; height: 720px; display: flex; flex-direction: column; }
svg { display: block; overflow: hidden; flex: none; }
svg text { font-family: "Open Sans", "Noto Sans", sans-serif; }
svg text.ser { font-family: "Liberation Serif", serif; }
svg text.lato, svg .lato text { font-family: Lato, sans-serif; }
.b { font-weight: bold; }
.i { font-style: italic; }
.fit { white-space: nowrap; display: inline-block; flex: none; text-align: left; transform-origin: 0 50%; }
h3, h4, p { margin: 0; }

.titlebar { height: 24px; display: flex; }
.quick { width: 114px; height: 24px; }
.redbar { width: 1067px; height: 22px; margin-top: 1px; display: flex; align-items: stretch; padding-left: 308px; background: linear-gradient(#ff2b22, #e30000 30%, #dc0000); border-bottom: 1px solid #f3867c; }
.tools-title { width: 207px; margin-top: -1px; background: linear-gradient(#a97738, #9a6428); border-top: 3px solid #22b422; border-left: 1px solid #55a030; border-right: 1px solid #55a030; display: flex; justify-content: center; align-items: center; color: #fff; font-weight: bold; padding-top: 3px; }
.doc-title { padding-left: 7px; padding-top: 4px; line-height: 15px; color: #260000; font-size: 12px; }
.winctl { width: 99px; height: 24px; }

.tabs { height: 24px; display: flex; border-bottom: 1px solid #c9ccd0; font-size: 11.8px; color: #484848; }
.file { width: 57px; margin-right: 2px; background: linear-gradient(#2f8b34, #23812b 60%, #45b14d); border: 1px solid #1f6b25; border-radius: 3px 3px 0 0; color: #fff; display: flex; align-items: center; justify-content: center; font-weight: 600; }
.tab { display: flex; align-items: center; justify-content: center; }
.home { width: 46px; height: 24px; border: 1px solid #c0c3c8; border-bottom: 0; border-radius: 2px 2px 0 0; background: #fff; }
.t-insert { width: 44px; } .t-page { width: 77px; } .t-form { width: 60px; } .t-data { width: 42px; } .t-rev { width: 50px; } .t-view { width: 44px; }
.ctx { display: flex; width: 208px; background: linear-gradient(#bdf0b6, #d8f6d3 40%, #fff); border-left: 1px solid #b0dcaa; border-right: 1px solid #b0dcaa; }
.t-des { width: 49px; } .t-lay { width: 51px; } .t-fmt { width: 51px; } .t-ana { width: 56px; }
.docctl { width: 100px; height: 24px; margin-left: auto; }
.help { font-size: 12px; font-weight: bold; fill: #fff; text-anchor: middle; }

.ribbon { height: 86px; display: flex; background: linear-gradient(#fff, #fbfbfc 60%, #eceef1); border-bottom: 2px solid #a7abb2; position: relative; }
.group { border-right: 1px solid #dcdfe3; padding-top: 4px; display: flex; flex-direction: column; }
.g-clip { width: 136px; } .g-font { width: 177px; } .g-align { width: 228px; border-color: #cfd2d6; } .g-num { width: 124px; border-color: #cfd2d6; } .g-sty { width: 155px; } .g-cell { width: 121px; } .g-edit { width: 158px; }
.body { height: 65px; display: flex; }
.body.col { flex-direction: column; }
.cap { height: 15px; display: flex; justify-content: center; align-items: center; color: #6c7682; font-size: 11.5px; position: relative; }
.g-clip .cap { padding-right: 19px; } .g-font .cap { padding-right: 18px; } .g-align .cap { padding-right: 20px; } .g-num .cap { padding-right: 17px; }
.dlg { width: 7px; height: 7px; position: absolute; right: 6px; top: 4px; }
.big { display: flex; flex-direction: column; align-items: center; line-height: 14px; font-size: 11.8px; }
.big b { font-weight: normal; display: flex; align-items: center; line-height: 14px; }
.ico32 { width: 32px; height: 32px; margin-bottom: 2px; }
.ico16 { width: 16px; height: 16px; }
.big > .fit { height: 14px; }
.dn { width: 0; height: 0; border: 2.5px solid transparent; border-top: 3px solid #555; border-bottom: 0; flex: none; }
.dn.side { margin-left: 4px; }
.dn.gap { margin-top: 5px; }
.off { color: #a4a4a4; }
.off .dn { border-top-color: #b0b0b0; }
.b-paste { width: 43px; }
.list { display: flex; flex-direction: column; }
.row { display: flex; align-items: center; gap: 2px; height: 21px; font-size: 12px; }
.combos { display: flex; align-items: center; height: 32px; padding: 0 0 3px 2px; }
.combo { height: 22px; border: 1px solid #dedede; background: #fff; display: flex; align-items: center; justify-content: space-between; padding: 0 3px 0 2px; font-size: 11.8px; }
.c-face { width: 93px; } .c-size { width: 38px; border-left: 0; } .c-num { width: 118px; margin-left: 1px; color: #a4a4a4; background: #fbfbfb; }
.grow { width: 44px; height: 22px; }
.strip { width: 177px; height: 25px; }
.numstrip { width: 123px; height: 25px; }
.alignstrip { width: 116px; height: 58px; }
.wrapcol { padding-left: 5px; }
.r32 { height: 33px; } .r29 { height: 24px; }
.s1 { width: 61px; margin-left: 4px; } .s2 { width: 49px; } .s3 { width: 38px; }
.c1 { width: 39px; margin-left: 2px; } .c2 { width: 38px; } .c3 { width: 39px; }
.edit { padding-left: 6px; width: 76px; }
.edit .row { gap: 1px; font-size: 11.8px; }
.edit .e1 { height: 19px; } .edit .e2 { height: 21px; }
.f1 { width: 41px; } .f2 { width: 37px; }
.bot { position: absolute; right: 0; top: -8px; width: 30px; height: 84px; }

.warning { height: 33px; display: flex; align-items: center; padding: 0 7px; background: linear-gradient(#fff4b4, #ffea7e); border-top: 1px solid #e6dca0; border-bottom: 1px solid #b9a860; color: #111; }
.shield { width: 18px; height: 22px; margin-right: 7px; }
.msg { margin-left: 11px; }
.enable { margin: 0 0 0 12px; padding: 0; width: 92px; height: 20px; border: 1px solid #c6ae50; border-radius: 1px; background: #ffef97; font: 11.5px "Open Sans", sans-serif; color: #111; }
.wclose { width: 10px; height: 10px; margin-left: auto; }

.formula { height: 23px; display: flex; border-top: 1px solid #8e939c; border-bottom: 1px solid #9ba0a9; background: #fff; }
.namebox { width: 148px; display: flex; align-items: center; justify-content: flex-end; padding-right: 6px; font-size: 13px; color: #222; }
.namebox .fit { margin-right: 47px; }
.namebox .dn { border-width: 4px 3.500px 0; border-top-color: #333; }
.fxicon { width: 81px; height: 21px; }
.input { flex: 1; }
.expand { width: 16px; height: 21px; background: #dfe2e8; }

.book { height: 443px; display: flex; flex-direction: column; background: #000; }
.colhead { height: 20px; display: flex; background: #dee1e6; border-top: 1px solid #a9aeb8; border-bottom: 1px solid #a2a7b0; }
.colhead div { flex: none; border-right: 1px solid #b4b9c1; display: flex; justify-content: center; align-items: center; font-size: 12.5px; color: #333; overflow: hidden; }
.colhead .corner { justify-content: flex-end; align-items: flex-end; }
.corner svg { width: 14px; height: 13px; margin: 0 3px 2px 0; }
.work { flex: 1; display: flex; height: 423px; }
.rowhead { width: 27px; overflow: hidden; background: #dfe3e8; border-right: 1px solid #a4a9b2; }
.rowhead div { border-bottom: 1px solid #b6bbc3; display: flex; align-items: flex-end; justify-content: center; line-height: 16px; font-size: 12px; color: #444; overflow: hidden; }
.sheet { width: 1234px; height: 423px; position: relative; overflow: hidden; background: #000; }
.vscroll { width: 19px; height: 423px; }

.kpis { width: 161px; margin-left: 10px; padding-top: 35px; display: flex; flex-direction: column; }
.kpi { background: #e26b0a; color: #140a00; font-family: "Liberation Serif", serif; text-align: center; }
.kpi h3 { font-size: 16px; line-height: 18px; }
.kpi p { font-size: 19px; line-height: 22px; -webkit-text-stroke: .4px #140a00; }
.k1 { height: 51px; padding-top: 5px; margin-bottom: 32px; } .k1 p { margin-top: 5px; }
.k2 { height: 57px; padding-top: 11px; margin-bottom: 41px; } .k2 p { margin-top: 4px; }
.k3 { height: 64px; padding-top: 19px; margin-bottom: 28px; } .k3 p { margin-top: 3px; }
.k4 { height: 84px; padding-top: 0; }
.kpi h4 { font: bold 14.5px/21px "Open Sans", sans-serif; color: #000; }
.pair { display: flex; justify-content: space-between; padding: 0 3px; font-weight: bold; font-size: 17px; line-height: 18px; }
.p2 { margin-top: 5px; }

.chart { position: absolute; }
.ch-marital { left: 203px; top: 2px; width: 358px; height: 210px; }
.ch-job { left: 563px; top: 0; width: 340px; height: 36px; }
.ch-edu { left: 905px; top: 2px; width: 328px; height: 196px; }
.ch-trend { left: 203px; top: 216px; width: 378px; height: 207px; }
.ch-pie { left: 518px; top: 216px; width: 290px; height: 200px; }
.ch-scatter { left: 813px; top: 202px; width: 420px; height: 221px; }
.ch-rate { left: 560px; top: 36px; width: 356px; height: 180px; }
.chart text { fill: #e06c0c; font-family: Lato, sans-serif; }
.chart text.ttl { font-family: "Liberation Serif", serif; font-weight: bold; font-size: 17px; fill: #e8700e; }

.sheettabs { height: 18px; display: flex; background: #e2e5ea; font-size: 12.3px; color: #4d5560; border-top: 1px solid #b8bcc4; border-bottom: 1px solid #8e949e; }
.navs { width: 66px; height: 18px; border-right: 1px solid #c0c4cb; }
.stab { display: flex; align-items: center; justify-content: center; position: relative; }
.stab:not(.active):not(.w4)::after { content: ""; position: absolute; right: 0; top: 1px; height: 17px; border-right: 1px solid #a9aeb7; transform: skewX(-28deg); }
.w1 { width: 76px; } .w2 { width: 129px; } .w3 { width: 120px; } .w4 { width: 87px; }
.active { width: 85px; padding-left: 4px; background: #fff; font-weight: bold; color: #3c3c3c; }
.hscroll { width: 717px; height: 18px; }

.status { height: 21px; display: flex; align-items: center; justify-content: space-between; background: linear-gradient(#eceef1, #d4d8dc 45%, #bcc1c6); border-bottom: 1px solid #888; padding-left: 6px; color: #555; }
.views { width: 240px; height: 20px; }

.taskbar { height: 48px; display: flex; align-items: center; background: linear-gradient(90deg, #22242e, #29232a 50%, #242226); color: #fff; }
.weather { display: flex; align-items: center; width: 304px; padding-left: 18px; gap: 2px; }
.wicon { width: 30px; height: 30px; margin-top: -8px; }
.wtext { display: flex; flex-direction: column; align-items: flex-start; line-height: 16px; font-size: 12px; }
.wtext .fit + .fit { color: #d8d8dc; }
.start { width: 23px; height: 23px; }
.search { width: 217px; height: 29px; margin-left: 15px; border-radius: 15px; background: #f2f1f3; color: #666; display: flex; align-items: center; font-size: 13.5px; padding-left: 9px; }
.mag { width: 18px; height: 18px; margin-right: 9px; }
.scene { width: 50px; height: 24px; margin-left: auto; margin-right: 2px; }
.apps { display: flex; margin-left: 4px; }
.appi { width: 44px; height: 40px; display: flex; align-items: center; justify-content: center; position: relative; }
.appi svg { width: 30px; height: 30px; overflow: visible; }
.run::after { content: ""; position: absolute; bottom: 1px; left: 19px; width: 6px; height: 3px; border-radius: 2px; background: #9a9a9e; }
.cur { width: 39px; margin-left: 2px; background: #38353a; border-radius: 4px; }
.cur::after { content: ""; position: absolute; bottom: 1px; left: 12px; width: 16px; height: 3px; border-radius: 2px; background: #4cc2ff; }
.tray { width: 162px; height: 32px; margin-left: auto; }
.clock { width: 54px; display: flex; flex-direction: column; align-items: flex-end; line-height: 16px; font-size: 12px; }
.bell { width: 18px; height: 18px; margin: 0 18px 0 8px; }
```
FILE: charts.js
```js
const NS = 'http://www.w3.org/2000/svg';
const $ = id => document.getElementById(id);

/* Condense or widen each label to its slot width. */
document.querySelectorAll('.fit').forEach(el => {
  const target = +el.dataset.w;
  const nat = el.getBoundingClientRect().width;
  el.style.width = target + 'px';
  el.style.transform = `scaleX(${(target / nat).toFixed(4)})`;
});

/* Column and row headings. */
const colEdges = [27, 37, 115, 199, 227, 291, 355, 438, 484, 516, 544, 601, 652, 694, 749, 809, 868, 878, 942, 1006, 1130, 1194, 1258];
$('cols').innerHTML = '<div class="corner" style="width:27px"><svg viewBox="0 0 14 13"><path d="M14 0v13H0z" fill="#b9bec6"/></svg></div>' +
  colEdges.slice(1).map((e, i) => `<div style="width:${e - colEdges[i]}px">${String.fromCharCode(65 + i)}</div>`).join('') +
  '<svg width="22" height="19" viewBox="1258 191 22 19"><rect x="1261" y="191" width="17" height="19" fill="#e6e9ee"/><rect x="1262" y="192" width="15" height="5" fill="#fff" stroke="#888"/><path d="M1264 209l5-5 5 5z" fill="#444"/></svg>';
const rowEdges = [210, 245, 271, 297, 317, 329, 357, 386, 406, 426, 463, 490, 518, 538, 558, 578, 602, 622, 642];
$('rows').innerHTML = rowEdges.slice(1).map((e, i) => `<div style="height:${e - rowEdges[i]}px">${i + 1}</div>`).join('');

const txt = (x, y, s, w, o = {}) => {
  const a = o.anchor || 'start';
  const rot = o.rot ? ` transform="rotate(-90 ${x} ${y})"` : '';
  const len = w ? ` textLength="${w}" lengthAdjust="spacingAndGlyphs"` : '';
  return `<text class="${o.cls || ''}" x="${x}" y="${y}" font-size="${o.size || 12.5}" text-anchor="${a}"${len}${rot}>${s}</text>`;
};
const title = (x, y, s, w) => txt(x, y, s, w, { cls: 'ttl', size: 17 });
const line = (x1, y1, x2, y2, c = '#6f6f6f') => `<path d="M${x1} ${y1}L${x2} ${y2}" stroke="${c}" fill="none"/>`;

const shades = { o: ['#ff9a35', '#ff8e2b', '#b9641f', '#ffc56b'], p: ['#ffc3a0', '#f8ab85', '#d08a68', '#fff0dc'], t: ['#ffb07a', '#f59a62', '#c07c50', '#ffe0bd'], d: ['#e07c26', '#c96f20', '#8a4a12', '#ffb060'], u: ['#fbd0ba', '#e8b9a2', '#b98c78', '#fff'] };
const defs = p => '<defs>' + Object.entries(shades).map(([k, c]) =>
  `<linearGradient id="${p}${k}" x2="0" y2="1"><stop offset="0" stop-color="${c[0]}"/><stop offset=".35" stop-color="${c[1]}"/><stop offset="1" stop-color="${c[2]}"/></linearGradient>`).join('') +
  '<filter id="' + p + 'bl" x="-30%" y="-30%" width="160%" height="160%"><feGaussianBlur stdDeviation="1.8"/></filter></defs>';
const bar = (p, k, x, y, w, y2, bev) => {
  const h = y2 - y, b = Math.min(bev, h);
  return `<rect x="${x}" y="${y}" width="${w}" height="${h}" fill="url(#${p}${k})"/>` +
    `<path d="M${x} ${y}h${w}l-${b} ${b}h-${w - 2 * b}z" fill="${shades[k][3]}" opacity=".8"/>` +
    `<path d="M${x + .75} ${y + 1}V${y2}M${x + w - .75} ${y + 1}V${y2}" stroke="#6b3508" stroke-width="1.500" opacity=".35"/>`;
};
const key = (p, k, x, y) => bar(p, k, x, y, 8, y + 8, 2.5);

/* Conversion by marital status */
{
  let s = defs('m') + title(263.5, 233, 'Term Deposit Conversion by Marital Status', 300);
  for (let i = 0; i <= 6; i++) {
    const y = Math.round(253 + i * 23.7) + .5, v = String(3000 - i * 500);
    s += line(305, y, i ? 548 : 310, y) + txt(298, y + 4, v, v.length * 6.8, { anchor: 'end' });
  }
  s += line(309.5, 253, 309.5, 399);
  [389.5, 468.5, 548.5].forEach(x => s += line(x, 395, x, 399));
  [[327, 374.3, 391.8], [406.5, 276.3, 382], [486, 347, 388]].forEach(([x, a, b]) => s += bar('m', 'o', x, a, 23, 395.5, 3.5) + bar('m', 'p', x + 23, b, 22.5, 395.5, 3.5));
  s += txt(326.5, 417, 'divorced', 47) + txt(407, 417, 'married', 44) + txt(492.5, 417, 'single', 31.5);
  s += key('m', 'o', 557.5, 317) + txt(568.5, 325.500, 'no', 14) + key('m', 'p', 557.5, 341) + txt(568, 349, 'yes', 18);
  $('marital').innerHTML = s;
}

$('jobtitle').innerHTML = title(616, 223.5, 'Term Deposit Subscription Rate by', 246) + title(706, 244, 'Job Type', 65);

const months = ['jan', 'feb', 'mar', 'apr', 'may', 'jun', 'jul', 'aug', 'sep', 'oct', 'nov', 'dec'];
const mw = [15.5, 17, 20.5, 17.5, 21.5, 17, 12, 18.5, 18.5, 16, 19, 18];

/* Subscription rate, selected chart */
{
  let s = defs('r') + '<rect x="588.5" y="247.500" width="352" height="177" rx="3" fill="#5a5a5a" stroke="#b5b5b5"/><rect x="592.5" y="251.500" width="344" height="169.500" rx="6" fill="#000" stroke="#a0a0a0" stroke-width="1.300"/>';
  const grip = (x, y) => { for (let i = 0; i < 4; i++) s += `<circle cx="${x}" cy="${y}" r=".9" fill="#ddd"/>`, x += 2.4; };
  grip(761, 249.4); grip(761, 423);
  [590.3, 938.6].forEach(x => { for (let i = 0; i < 4; i++) s += `<circle cx="${x}" cy="${332.5 + i * 2.4}" r=".9" fill="#ddd"/>`; });
  [[591, 250], [938, 250], [591, 422], [938, 422]].forEach(([x, y]) => s += `<path d="M${x - 2} ${y}h4M${x} ${y - 2}v4" stroke="#e0e0e0" stroke-width="1.500" stroke-dasharray="1 .8"/>`);
  for (let i = 0; i <= 5; i++) {
    const y = Math.round(266 + i * 23) + .5;
    s += line(649, y, 653, y) + txt(641, y + 3.8, (50 - i * 10) + '.00%', i < 5 ? 40.5 : 33.5, { anchor: 'end' });
  }
  s += line(653.5, 266, 653.5, 385) + line(649, 381.5, 864, 381.5);
  const tops = [356.7, 341.7, 282.3, 337.3, 366.3, 357.3, 361.3, 352.7, 306, 275.3, 358.7, 278];
  tops.forEach((t, i) => {
    const cx = 661.8 + i * 17.55;
    s += line(cx + 8.8, 381, cx + 8.8, 385) + bar('r', 'o', cx - 3.8, t, 7.6, 381, 2) + txt(cx + 4.5, 389.5, months[i], mw[i], { anchor: 'end', rot: 1, size: 12 });
  });
  s += key('r', 'o', 885, 332.500) + txt(896, 340.500, 'Total', 28);
  $('rate').innerHTML = s;
}

const pt = (cx, cy, r, a) => { const t = a * Math.PI / 180; return `${(cx + r * Math.sin(t)).toFixed(2)} ${(cy - r * Math.cos(t)).toFixed(2)}`; };
const slice = (p, k, cx, cy, R, r, a, b) => {
  const lg = b - a > 180 ? 1 : 0, id = p + 'c' + Math.round(a);
  const d = r ? `M${pt(cx, cy, R, a)}A${R} ${R} 0 ${lg} 1 ${pt(cx, cy, R, b)}L${pt(cx, cy, r, b)}A${r} ${r} 0 ${lg} 0 ${pt(cx, cy, r, a)}Z`
    : `M${cx} ${cy}L${pt(cx, cy, R, a)}A${R} ${R} 0 ${lg} 1 ${pt(cx, cy, R, b)}Z`;
  return `<clipPath id="${id}"><path d="${d}"/></clipPath><g clip-path="url(#${id})"><path d="${d}" fill="url(#${p}${k})"/>` +
    `<g filter="url(#${p}bl)"><path d="${d}" fill="none" stroke="#5d2f0a" stroke-width="3.500" opacity=".7"/><path d="${d}" transform="translate(.5 2.500)" fill="none" stroke="${shades[k][3]}" stroke-width="2.400" opacity=".8"/></g></g>`;
};

/* Education doughnut */
{
  const c = [1031.3, 326, 71.5, 35.8];
  let s = defs('e') + title(940, 231, 'Client Education Level Distribution', 228.5);
  s += slice('e', 'd', ...c, 0, 53.8) + slice('e', 'o', ...c, 53.8, 238) + slice('e', 't', ...c, 238, 346) + slice('e', 'u', ...c, 346, 359.99);
  [['d', 'primary', 42], ['o', 'secondary', 55], ['t', 'tertiary', 39], ['u', 'unknown', 50]].forEach(([k, n, w], i) => s += key('e', k, 1147, 285.5 + i * 24) + txt(1158, 293.5 + i * 24, n, w));
  $('edu').innerHTML = s;
}

/* Monthly trend */
{
  let s = title(273.5, 442.500, 'Monthly Subscription Rate Trends', 239);
  for (let i = 0; i <= 5; i++) {
    const y = Math.round(505 + i * 20.4) + .5;
    s += line(303, y, 530, y, '#777') + txt(295.5, y + 4, (50 - i * 10) + '.00%', i < 5 ? 40.5 : 33.5, { anchor: 'end' });
  }
  s += line(307.5, 505, 307.5, 611);
  const pts = [[200, 497], [255, 459], [312, 299], [368, 444], [422, 522], [478, 497], [533, 511], [589, 487], [645, 363], [700, 277], [756, 499], [813, 284]].map(([x, y]) => [250 + x / 3, 420 + y / 3]);
  pts.forEach(([x], i) => s += line(x + 9.3, 607, x + 9.3, 611) + txt(x + 5, 616, months[i], mw[i], { anchor: 'end', rot: 1, size: 12 }));
  s += `<polyline points="${pts.map(p => p.join()).join(' ')}" fill="none" stroke="#ee7611" stroke-width="2.300" stroke-linejoin="round"/>`;
  s += '<path d="M546 598h27.500" stroke="#ee7611" stroke-width="2.200"/>' + txt(575, 602, 'Total', 28);
  $('trend').innerHTML = s;
}

/* Overall rate pie */
{
  let s = defs('p') + title(554, 440.5, 'Overall Term Deposit Subscription', 245) + title(661, 460.5, 'Rate', 30.5);
  s += slice('p', 'o', 678, 545, 55.3, 0, 0, 318) + slice('p', 'p', 678, 545, 55.3, 0, 318, 359.99);
  s += key('p', 'o', 791.5, 531) + txt(802.5, 539.500, 'no', 14) + key('p', 'p', 791.5, 555) + txt(802, 563.5, 'yes', 18);
  $('pie').innerHTML = s;
}

/* Duration against age */
{
  let s = '<defs><linearGradient id="dg" x2="0" y2="1"><stop offset="0" stop-color="#e8872f"/><stop offset=".5" stop-color="#e8822a"/><stop offset=".55" stop-color="#c06a1c"/><stop offset="1" stop-color="#8f4c12"/></linearGradient><g id="dm"><path d="M0-6.800L6.600 0 0 6.800-6.600 0z" fill="url(#dg)"/><path d="M0-5.300L5 0H-5z" fill="#ffa447"/><path d="M-5 0H5L0 3.600z" fill="#f58d30"/></g></defs>';
  s += title(947, 434.500, 'Call Duration vs. Client Age', 180);
  for (let i = 0; i <= 7; i++) {
    const y = Math.round(455 + i * 21.2) - .5, v = String(3500 - i * 500);
    s += line(886, y, i ? 1127 : 891, y) + txt(878.5, y + 4, v, v.length * 6.8, { anchor: 'end' });
  }
  s += line(890.5, 454, 890.5, 607);
  for (let i = 0; i <= 5; i++) {
    const x = 890.5 + i * 47.3, v = String(i * 20);
    s += line(x, 603, x, 607) + txt(x, 625, v, v.length * 6.8, { anchor: 'middle' });
  }
  const dm = (x, y) => s += `<use href="#dm" x="${(840 + x / 3).toFixed(1)}" y="${(420 + y / 3).toFixed(1)}"/>`;
  const env = [[283, 490], [300, 460], [320, 435], [335, 375], [350, 350], [375, 350], [400, 360], [450, 350], [500, 362], [525, 385], [565, 390], [590, 430], [615, 465], [655, 475], [690, 488], [715, 490], [745, 500], [768, 532]];
  const top = x => { for (let i = 1; i < env.length; i++) if (x <= env[i][0]) { const [a, b] = env[i - 1], [c, d] = env[i]; return b + (d - b) * (x - a) / (c - a); } return 530; };
  let seed = 7;
  const rnd = () => (seed = (seed * 16807) % 2147483647) / 2147483647;
  for (let x = 300; x < 605; x += 7) dm(x, 551);
  for (let i = 0; i < 650; i++) {
    const x = 283 + Math.floor(rnd() * 69) * 7.08, t = top(x), bottom = x < 300 ? 538 : x > 620 ? 545 : 550;
    if (x < 770) dm(x, bottom - (bottom - t) * Math.pow(rnd(), x > 600 ? 1 : 1.15));
  }
  [[407, 199], [571, 165], [485, 237], [358, 297], [393, 310], [457, 285], [499, 299], [535, 292], [437, 316], [462, 325], [416, 327], [343, 330], [360, 330], [343, 345], [335, 367], [372, 352], [421, 360], [480, 350], [499, 355], [550, 347], [563, 352], [540, 372], [581, 373], [566, 400], [585, 420], [657, 405], [640, 438], [622, 426], [713, 417], [688, 437], [741, 435], [715, 465], [741, 463], [750, 500], [768, 530], [648, 467], [670, 490], [340, 407], [380, 390], [428, 400], [508, 408], [457, 385], [480, 385], [452, 430], [315, 447], [350, 435], [298, 470], [285, 490], [283, 522], [575, 445], [540, 450], [380, 465], [338, 473], [415, 482], [437, 463], [505, 468], [465, 502], [387, 505], [350, 530], [308, 545], [420, 545], [435, 530], [498, 500], [558, 525], [528, 548], [648, 515], [685, 517], [612, 470], [638, 548], [740, 525], [575, 488]].forEach(p => dm(...p));
  s += '<use href="#dm" transform="translate(1162.5 538.5) scale(.75)"/>' + txt(1169.5, 542, 'duration', 46.500);
  $('scatter').innerHTML = s;
}
```
